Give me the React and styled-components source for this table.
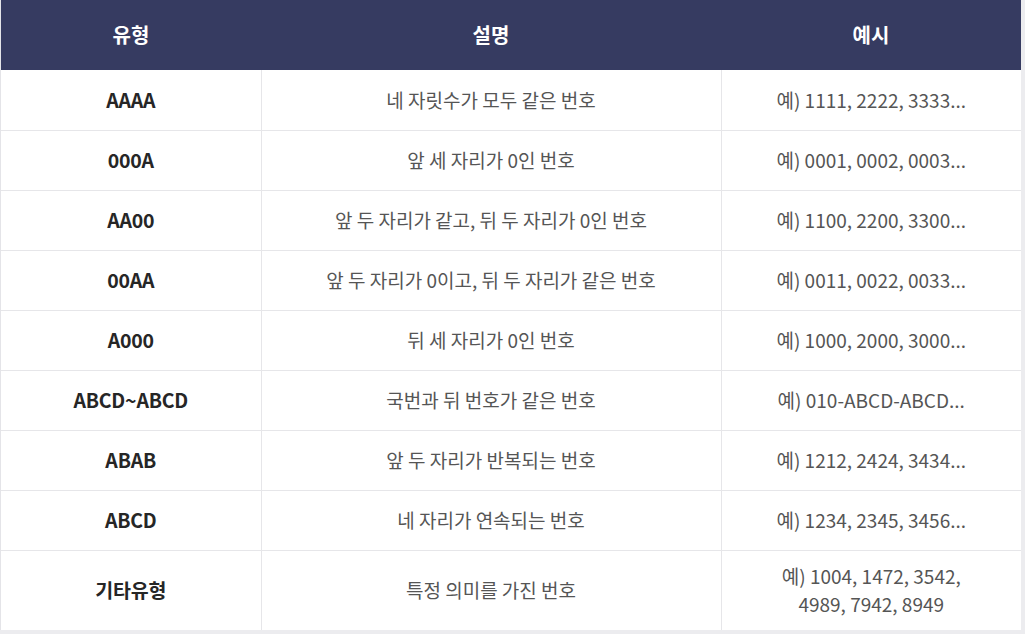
import React from "react";
import styled, { createGlobalStyle } from "styled-components";

const Global = createGlobalStyle`
  html, body { margin: 0; padding: 0; background: #ececef; }
  body { font-family: "Noto Sans CJK KR", "Noto Sans", sans-serif; }
`;

const Wrap = styled.div`
  width: 1020px;
  background: #fff;
  border-left: 1px solid #e4e4e8;
`;

const Table = styled.table`
  width: 100%;
  border-collapse: collapse;
  table-layout: fixed;
`;

const Th = styled.th`
  height: 70px;
  background: #363b61;
  color: #fff;
  font-size: 20px;
  line-height: 26px;
  font-weight: 700;
  text-align: center;
  padding: 0;
`;

const Row = styled.tr`
  height: ${(p) => (p.$tall ? 80 : 60)}px;
  border-bottom: 1px solid #e6e6e9;
  &:last-child { border-bottom: none; }
`;

const Td = styled.td`
  text-align: center;
  vertical-align: middle;
  padding: 0;
  font-size: ${(p) => (p.$strong ? 19.5 : 19)}px;
  line-height: 28px;
  color: ${(p) => (p.$strong ? "#262626" : "#555")};
  font-weight: ${(p) => (p.$strong ? 700 : 400)};
  letter-spacing: ${(p) => (p.$strong ? "-0.2px" : "0")};
  & + & { border-left: 1px solid #e6e6e9; }
`;

const rows = [
  ["AAAA", "네 자릿수가 모두 같은 번호", "예) 1111, 2222, 3333..."],
  ["000A", "앞 세 자리가 0인 번호", "예) 0001, 0002, 0003..."],
  ["AA00", "앞 두 자리가 같고, 뒤 두 자리가 0인 번호", "예) 1100, 2200, 3300..."],
  ["00AA", "앞 두 자리가 0이고, 뒤 두 자리가 같은 번호", "예) 0011, 0022, 0033..."],
  ["A000", "뒤 세 자리가 0인 번호", "예) 1000, 2000, 3000..."],
  ["ABCD~ABCD", "국번과 뒤 번호가 같은 번호", "예) 010-ABCD-ABCD..."],
  ["ABAB", "앞 두 자리가 반복되는 번호", "예) 1212, 2424, 3434..."],
  ["ABCD", "네 자리가 연속되는 번호", "예) 1234, 2345, 3456..."],
];

export default function App() {
  return (
    <>
      <Global />
      <Wrap>
        <Table>
          <colgroup>
            <col style={{ width: 260 }} />
            <col style={{ width: 460 }} />
            <col />
          </colgroup>
          <thead>
            <tr>
              <Th>유형</Th>
              <Th>설명</Th>
              <Th>예시</Th>
            </tr>
          </thead>
          <tbody>
            {rows.map((r) => (
              <Row key={r[0]}>
                <Td $strong>{r[0]}</Td>
                <Td>{r[1]}</Td>
                <Td>{r[2]}</Td>
              </Row>
            ))}
            <Row $tall>
              <Td $strong>기타유형</Td>
              <Td>특정 의미를 가진 번호</Td>
              <Td>
                예) 1004, 1472, 3542,
                <br />
                4989, 7942, 8949
              </Td>
            </Row>
          </tbody>
        </Table>
      </Wrap>
    </>
  );
}
